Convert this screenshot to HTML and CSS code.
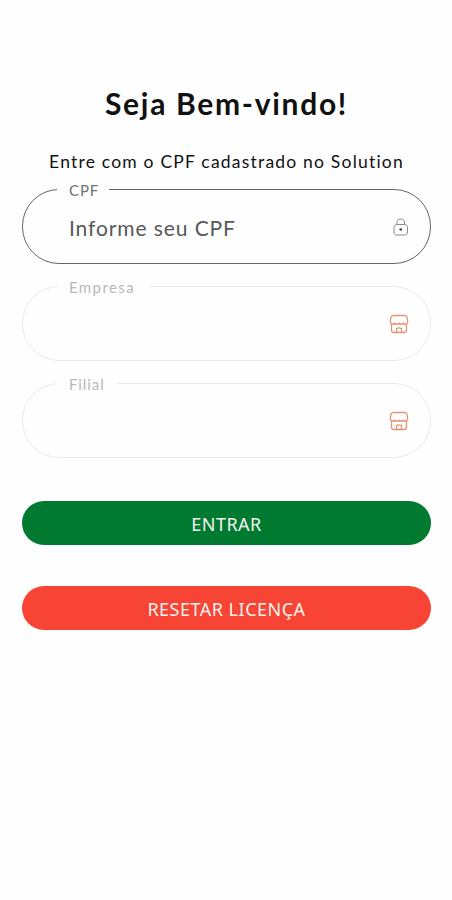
FILE: index.html
```html
<!DOCTYPE html>
<html lang="pt-BR">
<head>
    <meta charset="UTF-8">
    <meta name="viewport" content="width=device-width, initial-scale=1.0">
    <title>Login</title>
    <link rel="stylesheet" href="styles.css">
</head>
<body>
    <form class="login">
        <h1 class="title">Seja Bem-vindo!</h1>
        <p class="subtitle">Entre com o CPF cadastrado no Solution</p>

        <fieldset class="field active">
            <legend class="label-cpf">CPF</legend>
            <div class="field-row">
                <input type="text" id="cpf" placeholder="Informe seu CPF">
                <svg class="icon-lock" viewBox="0 0 18 20">
                    <path d="M5 7.500h7.500c2 0 3 1.500 3 3.500v4c0 2-1 3-3 3H5c-2 0-3-1-3-3v-4c0-2 1-3.500 3-3.500z"/>
                    <path d="M4.800 7.500C4.800 3.800 6 2 8.750 2s3.950 1.800 3.950 5.500"/>
                    <circle cx="8.750" cy="12.500" r="1.300"/>
                </svg>
            </div>
        </fieldset>

        <fieldset class="field">
            <legend class="label-empresa">Empresa</legend>
            <div class="field-row">
                <input type="text" id="empresa">
                <svg class="icon-store" viewBox="0 0 20 20">
                    <path d="M4.500 1.500h11c1.600 0 2.300.7 2.600 2l.6 4c0 1.500-.8 2.500-2.200 2.500H3.500C2.100 10 1.300 9 1.300 7.500l.6-4c.3-1.300 1-2 2.600-2z"/>
                    <path d="M2.500 10v6c0 1.700.8 2.500 2.500 2.500h10c1.700 0 2.500-.8 2.500-2.500v-6M7.500 18.500V15c0-1.500 5-1.500 5 0v3.500M5.800 8.500V10M10 8.500V10M14.200 8.500V10"/>
                </svg>
            </div>
        </fieldset>

        <fieldset class="field">
            <legend class="label-filial">Filial</legend>
            <div class="field-row">
                <input type="text" id="filial">
                <svg class="icon-store" viewBox="0 0 20 20">
                    <path d="M4.500 1.500h11c1.600 0 2.300.7 2.600 2l.6 4c0 1.500-.8 2.500-2.200 2.500H3.500C2.100 10 1.300 9 1.300 7.500l.6-4c.3-1.300 1-2 2.600-2z"/>
                    <path d="M2.500 10v6c0 1.700.8 2.500 2.500 2.500h10c1.700 0 2.500-.8 2.500-2.500v-6M7.500 18.500V15c0-1.500 5-1.500 5 0v3.500M5.800 8.500V10M10 8.500V10M14.200 8.500V10"/>
                </svg>
            </div>
        </fieldset>

        <button type="button" class="btn btn-enter">ENTRAR</button>
        <button type="button" class="btn btn-reset">RESETAR LICENÇA</button>
    </form>
</body>
</html>
```

FILE: styles.css
```css
body {
    margin: 0;
    background-color: #fefefe;
    font-family: Lato, sans-serif;
    color: #111;
}
.login {
    display: flex;
    flex-direction: column;
    padding: 83px 21px 0 22px;
}
.title {
    margin: 0;
    font-size: 30px;
    line-height: 40px;
    font-weight: 700;
    letter-spacing: 1.7px;
    text-align: center;
}
.subtitle {
    margin: 27px 0 5px;
    font-size: 17.5px;
    line-height: 24px;
    letter-spacing: 1.2px;
    text-align: center;
}
.field {
    box-sizing: border-box;
    height: 85px;
    min-width: 0;
    margin: 0 0 12px;
    padding: 0 20px 0 34px;
    border: 1px solid #e9e9e9;
    border-radius: 37px;
    color: #b8b8b8;
}
.field.active {
    border-color: #666;
    color: #707070;
}
.field legend {
    box-sizing: border-box;
    height: 20px;
    padding: 0 12px;
    font-size: 15px;
    line-height: 23px;
    letter-spacing: 0.9px;
}
.label-cpf {
    width: 52px;
}
.field .label-empresa {
    width: 92px;
    letter-spacing: 1.4px;
}
.label-filial {
    width: 60px;
}
.field-row {
    display: flex;
    align-items: center;
    height: 55px;
}
.field input {
    flex: 1;
    min-width: 0;
    padding: 2px 12px 0;
    border: 0;
    outline: 0;
    background: none;
    font-family: inherit;
    font-size: 21px;
    letter-spacing: 0.9px;
    color: #444;
}
.field input::placeholder {
    color: #585858;
}
.icon-lock,
.icon-store {
    fill: none;
    stroke-width: 1;
}
.icon-lock {
    width: 18px;
    height: 20px;
    stroke: #888;
}
.icon-lock circle {
    fill: #444;
    stroke: none;
}
.icon-store {
    width: 20px;
    height: 20px;
    margin-right: 1px;
    stroke: #e39470;
    stroke-width: 1.3;
}
.btn {
    height: 44px;
    padding: 2px 0 0;
    border: 0;
    border-radius: 22px;
    font-family: "Noto Sans", sans-serif;
    font-size: 18px;
    letter-spacing: 0.5px;
    color: #f3f3ee;
}
.btn-enter {
    margin-top: 31px;
    background-color: #007a30;
}
.btn-reset {
    margin-top: 41px;
    background-color: #f74434;
}
```
